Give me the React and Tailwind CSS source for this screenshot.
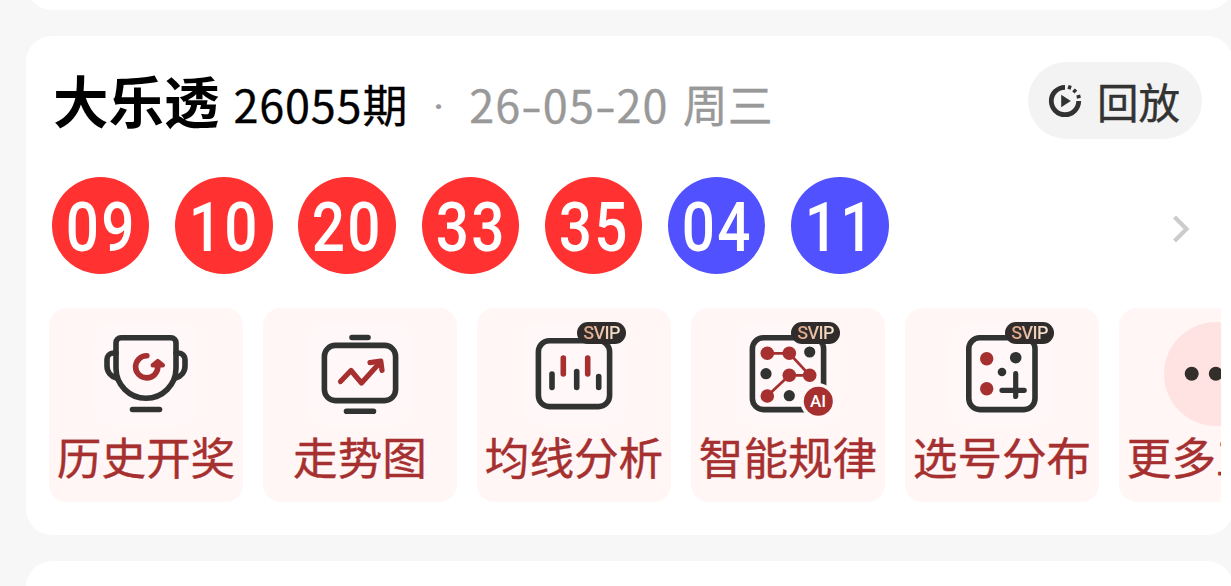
import clsx from 'clsx';

const DARK = '#313333';
const RED = '#a63030';

const balls = [
  { value: '09', color: 'red' },
  { value: '10', color: 'red' },
  { value: '20', color: 'red' },
  { value: '33', color: 'red' },
  { value: '35', color: 'red' },
  { value: '04', color: 'blue' },
  { value: '11', color: 'blue' },
];

const TrophyIcon = () => (
  <svg viewBox="0 0 104 104" className="size-[104px]" fill="none" strokeWidth="5.6" strokeLinecap="round" strokeLinejoin="round">
    <path stroke={DARK} d="M22 20.8a5 5 0 0 1 5-5h50a5 5 0 0 1 5 5V46.2a30 30 0 0 1-60 0z" />
    <path stroke={DARK} d="M22 31h-2.5a6.5 6.5 0 0 0-6.5 6.5V44c0 6 4 10.5 9.5 12" />
    <path stroke={DARK} d="M82 31h2.5a6.5 6.5 0 0 1 6.5 6.5V44c0 6-4 10.5-9.5 12" />
    <path stroke={DARK} d="M38.5 87.5h27" />
    <path stroke={RED} d="M52.800 33.700a11.100 11.100 0 1 0 11 11.100V42" />
    <path stroke={RED} fill={RED} d="M58.800 43.300l5-4.200 5 4.200z" strokeWidth="4.400" />
  </svg>
);

const TrendIcon = () => (
  <svg viewBox="0 0 104 104" className="size-[104px]" fill="none" strokeWidth="5.6" strokeLinecap="round" strokeLinejoin="round">
    <rect stroke={DARK} x="16.4" y="23.4" width="71.2" height="55.2" rx="11" />
    <path stroke={DARK} d="M44 15.5h16M38.5 89.3h27" />
    <path stroke={RED} strokeWidth="5.2" d="M32.500 59.500L43 48.500l10.500 12.500L72 40.500" />
    <path stroke={RED} strokeWidth="5.2" d="M62 40.700l10.800-1.500 1.200 9.200" />
  </svg>
);

const AverageIcon = () => (
  <svg viewBox="0 0 104 104" className="size-[104px]" fill="none" strokeWidth="5.6" strokeLinecap="round">
    <rect stroke={DARK} x="16.4" y="18.8" width="71.2" height="65.8" rx="11" />
    <path stroke={DARK} d="M30 52v13.5M54.7 49.5v16M76.7 54.5v11" />
    <path stroke={RED} d="M41.3 36v16M65.7 36v16" />
  </svg>
);

const PatternIcon = () => (
  <svg viewBox="0 0 104 104" className="size-[104px]" fill="none">
    <rect stroke={DARK} strokeWidth="5.6" x="16.4" y="15.8" width="71.2" height="71.8" rx="11" />
    <path stroke={RED} strokeWidth="2.8" d="M31.3 31.3h22l20.4 22H53.3l-22 20.7" />
    <g fill={RED}>
      <circle cx="31.3" cy="31.3" r="6.8" />
      <circle cx="53.3" cy="31.3" r="6.8" />
      <circle cx="73.7" cy="53.3" r="6.8" />
      <circle cx="53.3" cy="53.3" r="6.8" />
      <circle cx="31.3" cy="74" r="6.8" />
    </g>
    <g fill={DARK}>
      <circle cx="73.7" cy="30" r="5.6" />
      <circle cx="30" cy="51.7" r="5.6" />
      <circle cx="53.3" cy="73.7" r="5.6" />
    </g>
    <circle cx="82.3" cy="79.3" r="18" fill="#fff7f8" />
    <circle cx="82.3" cy="79.3" r="14.5" fill={RED} />
    <text x="82" y="85.2" textAnchor="middle" fill="#fff" fontSize="17" fontWeight="500" fontFamily="Roboto, sans-serif">
      AI
    </text>
  </svg>
);

const SpreadIcon = () => (
  <svg viewBox="0 0 104 104" className="size-[104px]" fill="none">
    <rect stroke={DARK} strokeWidth="5.6" x="18.8" y="15.8" width="66.2" height="71.8" rx="11" />
    <circle cx="36.7" cy="36.7" r="6.7" fill={RED} />
    <circle cx="36.7" cy="66.7" r="6.7" fill={RED} />
    <circle cx="65.7" cy="35.7" r="5.8" fill={DARK} />
    <circle cx="52" cy="50" r="4.3" fill={DARK} />
    <path stroke={DARK} strokeWidth="5.2" strokeLinecap="round" d="M52 68.3h22.2M65.7 51.7v22.8" />
  </svg>
);

const MoreIcon = () => (
  <svg viewBox="0 0 104 104" className="size-[104px]" fill="#332e2a">
    <circle cx="27.7" cy="51.7" r="7" />
    <circle cx="51.8" cy="51.7" r="7" />
    <circle cx="75.9" cy="51.7" r="7" />
  </svg>
);

const ReplayIcon = () => (
  <svg viewBox="0 0 34 34" className="size-[34px]" fill="none" stroke={DARK}>
    <path d="M17 3.3A13.7 13.7 0 1 0 30.7 17" strokeWidth="4.8" />
    <path d="M21 5.2l1.2-3.7M25.4 8.3l2.6-2.8M28.7 13.2l3.8-1" strokeWidth="3.3" />
    <path d="M13.2 10.8v12.4l9.6-6.2z" fill={DARK} stroke="none" />
  </svg>
);

const tools = [
  { label: '历史开奖', Icon: TrophyIcon },
  { label: '走势图', Icon: TrendIcon },
  { label: '均线分析', Icon: AverageIcon, svip: true },
  { label: '智能规律', Icon: PatternIcon, svip: true },
  { label: '选号分布', Icon: SpreadIcon, svip: true },
  { label: '更多工具', Icon: MoreIcon, more: true },
];

const Dash = () => <span className="inline-block w-[21.5px] origin-left scale-x-[1.35] text-left">-</span>;

const SvipBadge = () => (
  <span className="absolute top-0 left-[55px] flex h-[22px] w-[49px] items-center justify-center rounded-full bg-[#2f2c2b]">
    <span className="bg-linear-to-r from-[#dc9f80] to-[#fae9d6] bg-clip-text font-[Roboto] text-[18px] leading-[22px] font-medium tracking-[-0.6px] text-transparent">
      SVIP
    </span>
  </span>
);

const ToolCard = ({ label, Icon, svip, more }) => (
  <div className="flex h-[194px] w-[194px] shrink-0 flex-col items-center rounded-[18px] bg-[#fff6f5] pt-[14px]">
    <div className={clsx('relative size-[104px]', more ? 'rounded-full bg-[#ffe3e2]' : 'rounded-[20px] bg-[#fff7f8]')}>
      <Icon />
      {svip && <SvipBadge />}
    </div>
    <div className="mt-[6px] text-[44.6px] leading-[48px] whitespace-nowrap text-[#a63030] [-webkit-text-stroke:0.4px]">
      {label}
    </div>
  </div>
);

export default function App() {
  return (
    <div className="h-[586px] w-full overflow-hidden bg-[#f7f7f7] font-['Noto_Sans_CJK_SC',sans-serif]">
      <div className="flex h-[586px] w-[1233px] flex-col justify-center gap-[26px] pl-[26px]">
        <div className="-mt-[50px] h-[60px] shrink-0 rounded-[26px] bg-white" />

        <div className="h-[499px] shrink-0 rounded-[26px] bg-white pt-[26px] pl-[23px]">
          {/* Draw header */}
          <div className="flex h-[77px] items-center justify-between pr-[31px] pl-[4px]">
            <div className="flex items-baseline pt-[5px] whitespace-nowrap">
              <span className="text-[55.5px] leading-[77px] font-bold text-black">大乐透</span>
              <span className="ml-[14px] text-[45px] leading-[77px] tracking-[0.8px] text-black [-webkit-text-stroke:0.3px]">
                26055期
              </span>
              <span className="ml-[24px] w-[13px] text-center font-[Roboto] text-[45px] leading-[77px] text-[#999]">·</span>
              <span className="ml-[24px] text-[45px] leading-[77px] tracking-[1.1px] text-[#999] [-webkit-text-stroke:0.3px]">
                26
                <Dash />
                05
                <Dash />
                20<span className="ml-[14px] tracking-normal">周三</span>
              </span>
            </div>
            <button className="flex h-[77px] w-[174px] items-center gap-[15px] rounded-full bg-[#f3f3f3] pl-[20px] text-[#333]">
              <ReplayIcon />
              <span className="text-[41.5px] leading-[60px] [-webkit-text-stroke:0.4px]">回放</span>
            </button>
          </div>

          {/* Winning numbers */}
          <div className="mt-[38px] flex h-[97px] items-center justify-between pr-[43px] pl-[3px]">
            <div className="flex gap-[25.8px]">
              {balls.map((ball) => (
                <div
                  key={ball.value}
                  className={clsx(
                    'flex size-[97.4px] items-center justify-center rounded-full pt-[5px] pl-[1px]',
                    ball.color === 'red' ? 'bg-[#ff3131]' : 'bg-[#5151ff]'
                  )}
                >
                  <span className="scale-x-[0.86] font-[Roboto] text-[68px] leading-[92px] font-medium tracking-[2.5px] text-white">
                    {ball.value}
                  </span>
                </div>
              ))}
            </div>
            <svg viewBox="0 0 18 28" className="mt-[7px] h-[28px] w-[18px]" fill="none" stroke="#ccc" strokeWidth="4.2">
              <path d="M2.5 2l12 12-12 12" />
            </svg>
          </div>

          {/* Tool shortcuts, scrolls off the right side */}
          <div className="mt-[34px] flex w-[1172px] gap-[20px] overflow-hidden">
            {tools.map((tool) => (
              <ToolCard key={tool.label} {...tool} />
            ))}
          </div>
        </div>

        <div className="-mb-[35px] h-[60px] shrink-0 rounded-[26px] bg-white" />
      </div>
    </div>
  );
}
